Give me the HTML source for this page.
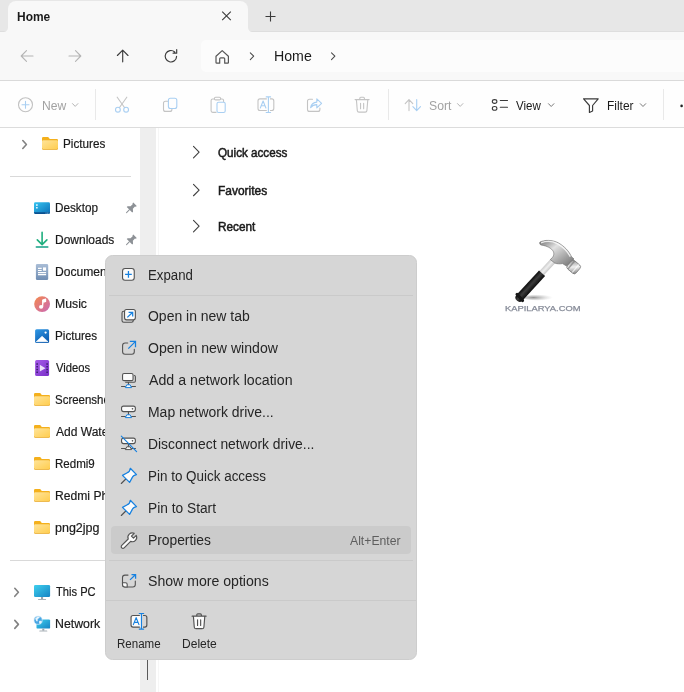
<!DOCTYPE html>
<html><head><meta charset="utf-8"><title>Home</title>
<style>*{box-sizing:border-box;margin:0;padding:0}
html,body{width:684px;height:692px;overflow:hidden;background:#fff;font-family:"Liberation Sans",sans-serif;color:#1b1b1b}
.a{position:absolute}
#root{position:relative;width:684px;height:692px;overflow:hidden;background:#fff}
.t{position:absolute;white-space:nowrap;line-height:1;transform-origin:0 0}
svg{position:absolute;left:0;top:0;overflow:visible}
</style></head><body><div id="root">

<div class="a" style="left:0;top:0;width:684px;height:32px;background:#e7e7e7"></div>
<div class="a" style="left:0;top:31px;width:684px;height:1px;background:#dedede"></div>
<div class="a" style="left:8px;top:1px;width:240px;height:31px;background:#f8f8f8;border-radius:8px 8px 0 0"></div>
<div class="a" style="left:0;top:32px;width:684px;height:48px;background:#f8f8f8"></div>
<div class="a" style="left:201px;top:40px;width:500px;height:32px;background:#fcfcfc;border-radius:5px"></div>
<div class="a" style="left:0;top:80px;width:684px;height:1px;background:#dadada"></div>
<div class="a" style="left:0;top:81px;width:684px;height:46px;background:#fefefe"></div>
<div class="a" style="left:0;top:127px;width:684px;height:1px;background:#dcdcdc"></div>
<div class="a" style="left:140px;top:128px;width:16px;height:564px;background:#eeeeee"></div>
<div class="a" style="left:158px;top:128px;width:1px;height:564px;background:#f6f6f6"></div>
<div class="a" style="left:146.6px;top:655px;width:1.8px;height:24.5px;background:#5a5a5a"></div>
<div class="a" style="left:95px;top:89px;width:1px;height:31px;background:#e9e9e9"></div>
<div class="a" style="left:388px;top:89px;width:1px;height:31px;background:#e9e9e9"></div>
<div class="a" style="left:663px;top:89px;width:1px;height:31px;background:#e9e9e9"></div>
<div class="a" style="left:10px;top:176px;width:121px;height:1px;background:#d9d9d9"></div>
<div class="a" style="left:10px;top:560px;width:121px;height:1px;background:#d9d9d9"></div>

<svg width="684" height="692" viewBox="0 0 684 692"><path d="M8 27.5A4.5 4.5 0 0 1 3.5 32L8 32Z" fill="#f8f8f8"/><path d="M248 27.5A4.5 4.5 0 0 0 252.5 32L248 32Z" fill="#f8f8f8"/>
<path d="M222.200 11.600l8.600 8.600M230.800 11.600l-8.600 8.600" stroke="#3b3b3b" stroke-width="1.1" fill="none"/>
<path d="M265.5 16.5h10M270.5 11.5v10" stroke="#3b3b3b" stroke-width="1.1" fill="none"/>
<path d="M33 56H21.2M26.5 50.7L21.2 56l5.3 5.3" stroke="#b4b4b4" stroke-width="1.1" fill="none" stroke-linecap="round" stroke-linejoin="round"/>
<path d="M69 56h11.8M75.5 50.7l5.3 5.3-5.3 5.3" stroke="#b4b4b4" stroke-width="1.1" fill="none" stroke-linecap="round" stroke-linejoin="round"/>
<path d="M122.7 61.8V50.2M117.4 55.5l5.3-5.3 5.3 5.3" stroke="#3b3b3b" stroke-width="1.15" fill="none" stroke-linecap="round" stroke-linejoin="round"/>
<path d="M176.6 56.3a5.7 5.7 0 1 1-1.9-4.3M176.7 49.6v3.6h-3.6" stroke="#3b3b3b" stroke-width="1.15" fill="none" stroke-linecap="round" stroke-linejoin="round"/>
<path d="M216 56.2l6.2-5.6 6.2 5.6v6.2a.8.8 0 0 1-.8.8h-2.9v-4.4a1 1 0 0 0-1-1h-3a1 1 0 0 0-1 1v4.4h-2.9a.8.8 0 0 1-.8-.8z" stroke="#555" stroke-width="1.2" fill="none" stroke-linejoin="round"/>
<path d="M250.3 52.8l3.4 3.4-3.4 3.4" stroke="#4a4a4a" stroke-width="1.05" fill="none" stroke-linecap="round" stroke-linejoin="round"/>
<path d="M331.5 52.8l3.4 3.4-3.4 3.4" stroke="#4a4a4a" stroke-width="1.05" fill="none" stroke-linecap="round" stroke-linejoin="round"/>
<circle cx="25.5" cy="104.7" r="7" stroke="#c2c2c2" stroke-width="1.1" fill="none"/>
<path d="M22 104.7h7M25.5 101.2v7" stroke="#a9cff2" stroke-width="1.1" fill="none" stroke-linecap="round"/>
<path d="M72.5 103.6l2.7 2.8 2.7-2.8" stroke="#b5b5b5" stroke-width="1.0" fill="none" stroke-linecap="round" stroke-linejoin="round"/>
<path d="M117.2 97.2l7.3 10.3M126.8 97.2l-7.3 10.3" stroke="#c4c4c4" stroke-width="1.1" fill="none" stroke-linecap="round"/>
<circle cx="117.9" cy="109.7" r="2.4" stroke="#a9cff2" stroke-width="1.1" fill="none"/><circle cx="126.1" cy="109.7" r="2.4" stroke="#a9cff2" stroke-width="1.1" fill="none"/>
<path d="M167.5 101.2h-2a2 2 0 0 0-2 2v6.2a2 2 0 0 0 2 2h4.4a2 2 0 0 0 2-2v-0.4" stroke="#c4c4c4" stroke-width="1.1" fill="none" stroke-linecap="round"/>
<rect x="168.4" y="98.3" width="8.4" height="10.2" rx="2" stroke="#a9cff2" stroke-width="1.1" fill="none"/>
<path d="M214.3 99h-1.6a1.6 1.6 0 0 0-1.6 1.6v10.2a1.6 1.6 0 0 0 1.6 1.6h3.3M220.6 99h1.4a1.6 1.6 0 0 1 1.6 1.6v1" stroke="#c4c4c4" stroke-width="1.1" fill="none" stroke-linecap="round"/>
<rect x="214.4" y="97.3" width="6.2" height="2.6" rx="1.2" stroke="#c4c4c4" stroke-width="1.1" fill="none"/>
<rect x="217" y="102.2" width="8.2" height="10.3" rx="1.6" stroke="#a9cff2" stroke-width="1.1" fill="none"/>
<path d="M266.79999999999995 98.9H260.0a2 2 0 0 0-2 2v7.599999999999994a2 2 0 0 0 2 2H266.79999999999995M270.0 98.9H271.79999999999995a2 2 0 0 1 2 2v7.599999999999994a2 2 0 0 1-2 2H270.0" stroke="#c4c4c4" stroke-width="1.1" fill="none"/><path d="M268.4 96.9v15.6M266.2 96.9h4.4M266.2 112.5h4.4" stroke="#a9cff2" stroke-width="1.1" fill="none" stroke-linecap="round"/><path d="M260.29999999999995 108.0l2.8-7 2.8 7M261.29999999999995 105.7h3.6" stroke="#a9cff2" stroke-width="1.1" fill="none" stroke-linecap="round" stroke-linejoin="round"/>
<path d="M312.5 99.2h-3a2 2 0 0 0-2 2v8.2a2 2 0 0 0 2 2h8.4a2 2 0 0 0 2-2v-1.4" stroke="#c4c4c4" stroke-width="1.1" fill="none" stroke-linecap="round"/>
<path d="M310.6 107.6c.6-3.4 2.600-5.300 6.200-5.500v-3.300l4.800 4.500-4.800 4.500v-3.200c-2.600 0-4.600.9-6.200 3z" stroke="#a9cff2" stroke-width="1.1" fill="none" stroke-linejoin="round"/>
<g transform="translate(362.1 105) scale(1.0)"><path d="M-7 -5.400h14M-2.300 -5.400v-1.300a1 1 0 0 1 1-1h2.600a1 1 0 0 1 1 1v1.300M-5.700 -5.400l.9 11a1.700 1.700 0 0 0 1.700 1.500h6.200a1.700 1.700 0 0 0 1.700-1.500l.9-11M-1.550 -1.800v5.600M1.550 -1.800v5.600" stroke="#c4c4c4" stroke-width="1.1" fill="none" stroke-linecap="round" stroke-linejoin="round"/></g>
<path d="M409 110.6V99.6M405.200 103.600l3.800-4 3.800 4" stroke="#c4c4c4" stroke-width="1.1" fill="none" stroke-linecap="round" stroke-linejoin="round"/>
<path d="M416.700 99.500v11M412.900 106.600l3.800 4 3.800-4" stroke="#a9cff2" stroke-width="1.1" fill="none" stroke-linecap="round" stroke-linejoin="round"/>
<path d="M457.5 103.6l2.7 2.8 2.7-2.8" stroke="#b5b5b5" stroke-width="1.0" fill="none" stroke-linecap="round" stroke-linejoin="round"/>
<ellipse cx="494.6" cy="101.5" rx="2.300" ry="1.900" stroke="#3a3a3a" stroke-width="1.1" fill="none"/><ellipse cx="494.6" cy="108.400" rx="2.300" ry="1.900" stroke="#3a3a3a" stroke-width="1.1" fill="none"/>
<path d="M500.3 100.500h7.200M500.3 107.300h7.200" stroke="#3a3a3a" stroke-width="1.1" fill="none" stroke-linecap="round"/>
<path d="M548.5 103.69999999999999l2.7 2.8 2.7-2.8" stroke="#7a7a7a" stroke-width="1.0" fill="none" stroke-linecap="round" stroke-linejoin="round"/>
<path d="M583.600 98.800h14.600l-5.600 6.700v5.500l-3.200 1.500v-7z" stroke="#3a3a3a" stroke-width="1.15" fill="none" stroke-linejoin="round"/>
<path d="M640.3 103.69999999999999l2.7 2.8 2.7-2.8" stroke="#7a7a7a" stroke-width="1.0" fill="none" stroke-linecap="round" stroke-linejoin="round"/>
<circle cx="681.6" cy="105.9" r="1.3" fill="#222"/>
<defs>
<linearGradient id="fg" x1="0" y1="0" x2="1" y2="1"><stop offset="0" stop-color="#ffe49a"/><stop offset="1" stop-color="#ffcd4f"/></linearGradient>
<linearGradient id="mus" x1="0" y1="0" x2="1" y2="1"><stop offset="0" stop-color="#f5894a"/><stop offset="1" stop-color="#c968b8"/></linearGradient>
<linearGradient id="desk" x1="0" y1="0" x2="1" y2="1"><stop offset="0" stop-color="#35c4f0"/><stop offset="1" stop-color="#0b6fb8"/></linearGradient>
<linearGradient id="doc" x1="0" y1="0" x2="0" y2="1"><stop offset="0" stop-color="#a9bdd6"/><stop offset="1" stop-color="#6f8db3"/></linearGradient>
<linearGradient id="pc" x1="0" y1="0" x2="1" y2="1"><stop offset="0" stop-color="#3fd0ee"/><stop offset="1" stop-color="#1583c4"/></linearGradient>
<linearGradient id="vid" x1="0" y1="0" x2="1" y2="1"><stop offset="0" stop-color="#a55be8"/><stop offset="1" stop-color="#7a2fc9"/></linearGradient>
</defs>
<path d="M22.8 140.5l3.6 4.0l-3.6 4.0" stroke="#828282" stroke-width="1.6" fill="none" stroke-linecap="round" stroke-linejoin="round"/>
<path d="M14.8 588.3l3.6 4.0l-3.6 4.0" stroke="#828282" stroke-width="1.6" fill="none" stroke-linecap="round" stroke-linejoin="round"/>
<path d="M14.8 620.4l3.6 4.0l-3.6 4.0" stroke="#828282" stroke-width="1.6" fill="none" stroke-linecap="round" stroke-linejoin="round"/>
<path d="M42 138.2a1.200 1.200 0 0 1 1.200-1.200h5.000l1.600 1.900h7.000a1.200 1.200 0 0 1 1.200 1.200v2H42z" fill="#f4b01c"/><rect x="42" y="140.2" width="16" height="9.5" rx="1.200" fill="#e8a419"/><rect x="42" y="140.2" width="16" height="8.8" rx="1.200" fill="url(#fg)"/>
<path d="M34 394.2a1.200 1.200 0 0 1 1.200-1.200h5.000l1.600 1.900h7.000a1.200 1.200 0 0 1 1.200 1.200v2H34z" fill="#f4b01c"/><rect x="34" y="396.2" width="16" height="9.5" rx="1.200" fill="#e8a419"/><rect x="34" y="396.2" width="16" height="8.8" rx="1.200" fill="url(#fg)"/>
<path d="M34 426.2a1.200 1.200 0 0 1 1.200-1.200h5.000l1.600 1.900h7.000a1.200 1.200 0 0 1 1.200 1.200v2H34z" fill="#f4b01c"/><rect x="34" y="428.2" width="16" height="9.5" rx="1.200" fill="#e8a419"/><rect x="34" y="428.2" width="16" height="8.8" rx="1.200" fill="url(#fg)"/>
<path d="M34 458.2a1.200 1.200 0 0 1 1.200-1.200h5.000l1.600 1.900h7.000a1.200 1.200 0 0 1 1.200 1.200v2H34z" fill="#f4b01c"/><rect x="34" y="460.2" width="16" height="9.5" rx="1.200" fill="#e8a419"/><rect x="34" y="460.2" width="16" height="8.8" rx="1.200" fill="url(#fg)"/>
<path d="M34 490.2a1.200 1.200 0 0 1 1.200-1.200h5.000l1.600 1.900h7.000a1.200 1.200 0 0 1 1.200 1.200v2H34z" fill="#f4b01c"/><rect x="34" y="492.2" width="16" height="9.5" rx="1.200" fill="#e8a419"/><rect x="34" y="492.2" width="16" height="8.8" rx="1.200" fill="url(#fg)"/>
<path d="M34 522.2a1.200 1.200 0 0 1 1.200-1.200h5.000l1.600 1.900h7.000a1.200 1.200 0 0 1 1.200 1.200v2H34z" fill="#f4b01c"/><rect x="34" y="524.2" width="16" height="9.5" rx="1.200" fill="#e8a419"/><rect x="34" y="524.2" width="16" height="8.8" rx="1.200" fill="url(#fg)"/>
<rect x="34" y="202.3" width="16" height="11.7" rx="1.4" fill="url(#desk)"/><path d="M34 212.300h16v0.300a1.400 1.400 0 0 1-1.400 1.400h-13.200a1.400 1.400 0 0 1-1.400-1.400z" fill="#0b4f8e"/><rect x="36" y="204.300" width="1.700" height="1.500" fill="#e8f8ff"/><rect x="36" y="207" width="1.700" height="1.500" fill="#d8f2ff"/><rect x="45.600" y="212.700" width="0.900" height="0.900" fill="#9fd8f5"/><rect x="47.200" y="212.700" width="0.900" height="0.900" fill="#9fd8f5"/><rect x="48.600" y="212.700" width="0.700" height="0.900" fill="#9fd8f5"/>
<path d="M42.100 232.400v11.600M37.300 239.900l4.800 4.700 4.800-4.700" stroke="#1fae7e" stroke-width="1.600" fill="none" stroke-linecap="round" stroke-linejoin="round"/><path d="M36.300 246.900h11.500" stroke="#14a086" stroke-width="1.500" fill="none" stroke-linecap="round"/>
<g transform="translate(131.2 208.0) rotate(45) scale(0.9)"><path d="M-2.700 -6.000h5.400v1.200l-0.900 0.700v3.300l2.500 2.200v1.300h-8.600v-1.300l2.500-2.200v-3.300l-0.900-0.700z" fill="#8d9196"/><path d="M0 2.700v4.600" stroke="#8d9196" stroke-width="1.100" stroke-linecap="round"/></g>
<g transform="translate(131.2 240.0) rotate(45) scale(0.9)"><path d="M-2.700 -6.000h5.400v1.200l-0.900 0.700v3.300l2.500 2.200v1.300h-8.600v-1.300l2.500-2.200v-3.300l-0.900-0.700z" fill="#8d9196"/><path d="M0 2.700v4.600" stroke="#8d9196" stroke-width="1.100" stroke-linecap="round"/></g>
<rect x="35.900" y="264.100" width="12.300" height="15.900" rx="1.300" fill="url(#doc)"/><path d="M38 268.300h3.700M38 270.450h3.700M38 272.600h8.100M38 274.650h8.100" stroke="#fff" stroke-width="1.150" fill="none"/><rect x="43" y="267.400" width="3.100" height="3.300" fill="#fff"/>
<circle cx="42.100" cy="304.100" r="7.900" fill="url(#mus)"/><ellipse cx="41.100" cy="306.900" rx="2.100" ry="1.800" fill="#fff"/><path d="M42.700 306.800v-6.800l2.900-0.900v2.300l-2.000 0.700" stroke="#fff" stroke-width="1.200" fill="#fff" stroke-linejoin="round"/>
<defs><linearGradient id="pic" x1="0" y1="0" x2="0.600" y2="1"><stop offset="0" stop-color="#3199e6"/><stop offset="1" stop-color="#0b5cb0"/></linearGradient></defs><rect x="35.100" y="329.200" width="14" height="13.800" rx="1.500" fill="url(#pic)"/><path d="M36.200 341.700l5.900-5.500 5.900 5.500z" fill="#fff" stroke="#fff" stroke-width="0.6" stroke-linejoin="round"/><circle cx="45.600" cy="332.600" r="1.150" fill="#fff"/>
<rect x="35.100" y="360.100" width="14" height="15.800" rx="1.500" fill="url(#vid)"/><path d="M39.800 364.800v6.800l5.700-3.400z" fill="#eadff7"/><rect x="36.3" y="363.2" width="1.700" height="1.500" rx="0.300" fill="#3f2072"/><rect x="36.3" y="365.9" width="1.700" height="1.500" rx="0.300" fill="#3f2072"/><rect x="36.3" y="368.7" width="1.700" height="1.500" rx="0.300" fill="#3f2072"/><rect x="36.3" y="371.4" width="1.700" height="1.500" rx="0.300" fill="#3f2072"/><rect x="46.3" y="363.2" width="1.700" height="1.500" rx="0.300" fill="#3f2072"/><rect x="46.3" y="365.9" width="1.700" height="1.500" rx="0.300" fill="#3f2072"/><rect x="46.3" y="368.7" width="1.700" height="1.500" rx="0.300" fill="#3f2072"/><rect x="46.3" y="371.4" width="1.700" height="1.500" rx="0.300" fill="#3f2072"/>
<rect x="34" y="585" width="16.100" height="12" rx="1.300" fill="url(#pc)"/><rect x="41" y="597" width="2.100" height="2.200" fill="#9aa4ad"/><rect x="38" y="599" width="8.100" height="1.100" rx="0.400" fill="#a9b1b8"/>
<rect x="36.500" y="619.400" width="13.600" height="9.200" rx="1.200" fill="url(#pc)"/><rect x="42.300" y="628.600" width="2.000" height="2.100" fill="#9aa4ad"/><rect x="39.300" y="630.500" width="8.000" height="1.100" rx="0.400" fill="#a9b1b8"/><circle cx="38.100" cy="620.300" r="4.100" fill="#4aa6e3"/><circle cx="38.100" cy="620.300" r="4.100" fill="none" stroke="#d5ecfa" stroke-width="0.700"/><path d="M35.200 618.600c1.200-1.600 3.000-2.200 4.600-1.500c-0.400 1.300-1.000 1.500-2.000 1.800c-0.600 1.000 0.500 1.800-0.600 2.600c-0.900 0.100-1.500-1.400-2.000-2.900zM39.300 621.000c1.000-0.600 2.000-0.300 2.600 0.400c-0.300 1.300-1.000 2.200-2.100 2.700c-0.700-0.900-1.000-2.100-0.500-3.100z" fill="#e6f4fd"/>
<path d="M193.500 146.4l5.600 5.700l-5.600 5.700" stroke="#404040" stroke-width="1.100" fill="none" stroke-linecap="round" stroke-linejoin="round"/>
<path d="M193.500 184.35000000000002l5.600 5.700l-5.600 5.700" stroke="#404040" stroke-width="1.100" fill="none" stroke-linecap="round" stroke-linejoin="round"/>
<path d="M193.500 220.45000000000002l5.600 5.700l-5.600 5.700" stroke="#404040" stroke-width="1.100" fill="none" stroke-linecap="round" stroke-linejoin="round"/>
<defs>
<linearGradient id="hm1" x1="0" y1="0" x2="1" y2="1"><stop offset="0" stop-color="#6f6f6f"/><stop offset="0.35" stop-color="#e2e2e2"/><stop offset="0.7" stop-color="#a2a2a2"/><stop offset="1" stop-color="#6e6e6e"/></linearGradient>
<linearGradient id="hm2" x1="0" y1="0" x2="1" y2="1"><stop offset="0" stop-color="#8a8a8a"/><stop offset="0.5" stop-color="#efefef"/><stop offset="1" stop-color="#7a7a7a"/></linearGradient>
<linearGradient id="hm4" x1="0" y1="0" x2="0" y2="1"><stop offset="0" stop-color="#0c0c0c"/><stop offset="0.45" stop-color="#3c3c3c"/><stop offset="1" stop-color="#0e0e0e"/></linearGradient>
<linearGradient id="hm3" x1="0" y1="0" x2="1" y2="1"><stop offset="0" stop-color="#0e0e0e"/><stop offset="0.5" stop-color="#3a3a3a"/><stop offset="1" stop-color="#111"/></linearGradient>
<radialGradient id="hsh" cx="0.35" cy="0.5" r="0.65"><stop offset="0" stop-color="#6e6e6e" stop-opacity="0.75"/><stop offset="1" stop-color="#bdbdbd" stop-opacity="0"/></radialGradient>
<filter id="hb" x="-10%" y="-10%" width="120%" height="120%"><feGaussianBlur stdDeviation="0.45"/></filter>
</defs>
<g filter="url(#hb)">
<ellipse cx="538" cy="297.600" rx="15" ry="2.800" fill="url(#hsh)"/>
<path d="M541.800 273.000L554.000 259.800" stroke="url(#hm2)" stroke-width="6.200" fill="none"/>
<path d="M0 -4.100H33.200V4.100H0A4.100 4.100 0 0 1 0 -4.100Z" transform="translate(519.600 297.600) rotate(-47.400)" fill="url(#hm4)"/>
<path d="M517.000 294.300L522.600 300.600" stroke="#151515" stroke-width="3.000" stroke-linecap="round" fill="none"/>
<path d="M540.000 242.000C544.500 239.900 552.000 239.600 558.000 242.700C564.000 246.000 569.000 251.000 571.500 256.800L574.000 259.000L566.500 266.000L562.500 263.600C559.500 264.000 557.000 264.000 554.700 263.000L550.300 259.600C553.600 257.000 554.600 254.000 553.200 251.300C551.600 248.300 547.000 245.800 541.000 245.000C539.600 244.500 539.300 242.800 540.000 242.000Z" fill="url(#hm1)" stroke="#6a6a6a" stroke-width="0.600"/>
<path d="M541.000 242.800C546.000 241.000 552.500 241.000 557.600 243.800C563.000 246.800 567.600 251.300 570.300 256.600" stroke="#fafafa" stroke-width="1.400" fill="none" opacity="0.850"/>
<g transform="rotate(40 573.700 267.000)"><rect x="568.000" y="261.600" width="11.400" height="10.800" rx="2.600" fill="url(#hm2)" stroke="#707070" stroke-width="0.700"/><rect x="569.800" y="261.800" width="1.500" height="10.400" fill="#7c7c7c" opacity="0.700"/><rect x="575.500" y="262.000" width="1.200" height="10.000" fill="#fff" opacity="0.700"/></g>
</g></svg>
<span class="t" style="left:16.81px;top:10.20px;font-size:13px;font-weight:bold;color:#1b1b1b;transform:scaleX(0.9200)">Home</span>
<span class="t" style="left:273.99px;top:48.85px;font-size:14px;font-weight:normal;color:#1b1b1b;transform:scaleX(1.0126)">Home</span>
<span class="t" style="left:42.07px;top:99.30px;font-size:13px;font-weight:normal;color:#a2a2a2;transform:scaleX(0.9320)">New</span>
<span class="t" style="left:428.50px;top:99.30px;font-size:13px;font-weight:normal;color:#a2a2a2;transform:scaleX(0.9391)">Sort</span>
<span class="t" style="left:516.08px;top:99.30px;font-size:13px;font-weight:normal;color:#1b1b1b;transform:scaleX(0.8901)">View</span>
<span class="t" style="left:606.58px;top:99.00px;font-size:13px;font-weight:normal;color:#1b1b1b;transform:scaleX(0.9189)">Filter</span>
<span class="t" style="left:62.90px;top:138.22px;font-size:12.5px;font-weight:normal;color:#1b1b1b;-webkit-text-stroke:0.2px #1b1b1b;transform:scaleX(0.9364)">Pictures</span>
<span class="t" style="left:54.80px;top:201.62px;font-size:12.5px;font-weight:normal;color:#1b1b1b;-webkit-text-stroke:0.2px #1b1b1b;transform:scaleX(0.9385)">Desktop</span>
<span class="t" style="left:54.98px;top:233.52px;font-size:12.5px;font-weight:normal;color:#1b1b1b;-webkit-text-stroke:0.2px #1b1b1b;transform:scaleX(0.9597)">Downloads</span>
<span class="t" style="left:54.97px;top:265.52px;font-size:12.5px;font-weight:normal;color:#1b1b1b;-webkit-text-stroke:0.2px #1b1b1b;transform:scaleX(0.9687)">Documents</span>
<span class="t" style="left:54.97px;top:297.52px;font-size:12.5px;font-weight:normal;color:#1b1b1b;-webkit-text-stroke:0.2px #1b1b1b;transform:scaleX(0.9795)">Music</span>
<span class="t" style="left:55.00px;top:329.52px;font-size:12.5px;font-weight:normal;color:#1b1b1b;-webkit-text-stroke:0.2px #1b1b1b;transform:scaleX(0.9341)">Pictures</span>
<span class="t" style="left:55.70px;top:361.52px;font-size:12.5px;font-weight:normal;color:#1b1b1b;-webkit-text-stroke:0.2px #1b1b1b;transform:scaleX(0.8980)">Videos</span>
<span class="t" style="left:55.24px;top:393.52px;font-size:12.5px;font-weight:normal;color:#1b1b1b;-webkit-text-stroke:0.2px #1b1b1b;transform:scaleX(0.9178)">Screenshots</span>
<span class="t" style="left:55.70px;top:425.52px;font-size:12.5px;font-weight:normal;color:#1b1b1b;-webkit-text-stroke:0.2px #1b1b1b;transform:scaleX(0.9630)">Add Watermark</span>
<span class="t" style="left:55.01px;top:457.52px;font-size:12.5px;font-weight:normal;color:#1b1b1b;-webkit-text-stroke:0.2px #1b1b1b;transform:scaleX(0.9238)">Redmi9</span>
<span class="t" style="left:54.97px;top:489.52px;font-size:12.5px;font-weight:normal;color:#1b1b1b;-webkit-text-stroke:0.2px #1b1b1b;transform:scaleX(0.9705)">Redmi Phone</span>
<span class="t" style="left:54.75px;top:521.52px;font-size:12.5px;font-weight:normal;color:#1b1b1b;-webkit-text-stroke:0.2px #1b1b1b;transform:scaleX(0.9988)">png2jpg</span>
<span class="t" style="left:55.50px;top:585.52px;font-size:12.5px;font-weight:normal;color:#1b1b1b;-webkit-text-stroke:0.2px #1b1b1b;transform:scaleX(0.8909)">This PC</span>
<span class="t" style="left:54.76px;top:617.52px;font-size:12.5px;font-weight:normal;color:#1b1b1b;-webkit-text-stroke:0.2px #1b1b1b;transform:scaleX(0.9867)">Network</span>
<span class="t" style="left:218.36px;top:146.74px;font-size:12px;font-weight:normal;color:#1b1b1b;-webkit-text-stroke:0.5px #1b1b1b;transform:scaleX(0.9718)">Quick access</span>
<span class="t" style="left:218.10px;top:184.74px;font-size:12px;font-weight:normal;color:#1b1b1b;-webkit-text-stroke:0.5px #1b1b1b;transform:scaleX(0.9949)">Favorites</span>
<span class="t" style="left:218.11px;top:220.64px;font-size:12px;font-weight:normal;color:#1b1b1b;-webkit-text-stroke:0.5px #1b1b1b;transform:scaleX(0.9828)">Recent</span>
<span class="t" style="left:505.11px;top:305.43px;font-size:8px;font-weight:normal;color:#858a97;-webkit-text-stroke:0.25px #858a97;transform:scaleX(1.1688)">KAPILARYA.COM</span>

<div class="a" style="left:105px;top:255px;width:312px;height:405px;background:#d6d6d6;border-radius:7.5px;border:1px solid #cdcdcd"></div>
<div class="a" style="left:110.5px;top:526px;width:300.3px;height:28px;background:#cbcbcb;border-radius:4px"></div>
<div class="a" style="left:109px;top:295px;width:304px;height:1px;background:#cacaca"></div>
<div class="a" style="left:109px;top:560px;width:304px;height:1px;background:#cacaca"></div>
<div class="a" style="left:106px;top:600px;width:310px;height:1px;background:#cacaca"></div>

<svg width="684" height="692" viewBox="0 0 684 692"><rect x="122.550" y="268.550" width="11.700" height="11.700" rx="2.500" fill="#fbfbfb" stroke="#525252" stroke-width="1.100"/><path d="M125.100 274.450h6.700M128.450 271.100v6.700" stroke="#1681e0" stroke-width="1.250" fill="none"/>
<path d="M124 311.300h-0.300a1.700 1.700 0 0 0-1.700 1.700v7.600a1.700 1.700 0 0 0 1.700 1.700h7.900a1.700 1.700 0 0 0 1.700-1.700v-0.500" stroke="#525252" stroke-width="1.100" fill="none"/><rect x="124.550" y="309.550" width="10.800" height="10.300" rx="2.000" fill="#fbfbfb" stroke="#525252" stroke-width="1.100"/><path d="M127.300 317.400l5.200-4.900M128.600 312.400h4.100v4.200" stroke="#1681e0" stroke-width="1.250" fill="none" stroke-linejoin="miter"/>
<path d="M127.700 343h-2.600a2.500 2.500 0 0 0-2.500 2.500v6.300a2.500 2.500 0 0 0 2.500 2.500h6.700a2.500 2.500 0 0 0 2.500-2.500v-2.600" stroke="#525252" stroke-width="1.100" fill="none" stroke-linecap="round"/><path d="M128.300 348.600l7.000-7.000M129.800 341.400h5.700v5.900" stroke="#1681e0" stroke-width="1.250" fill="none"/>
<path d="M134 375.500h0.200a1.200 1.200 0 0 1 1.200 1.200v4.400a1.200 1.200 0 0 1-1.200 1.200h-9" stroke="#525252" stroke-width="1.100" fill="none"/><rect x="122.550" y="373.450" width="10.500" height="7.200" rx="1.500" fill="#fbfbfb" stroke="#525252" stroke-width="1.100"/>
<path d="M128.450 382.0v3.000" stroke="#525252" stroke-width="1.100" fill="none"/><path d="M121.100 386.5h14.800" stroke="#525252" stroke-width="1.000" fill="none"/><path d="M125.300 387.6l1.500-2.800h3.300l1.500 2.800z" fill="#fbfbfb" stroke="#1681e0" stroke-width="1.000" stroke-linejoin="round"/>
<rect x="121.550" y="406.1" width="13.800" height="5.500" rx="2.000" fill="#fbfbfb" stroke="#525252" stroke-width="1.100"/><circle cx="132.500" cy="408.85" r="0.800" fill="#525252"/>
<path d="M128.450 412.0v3.000" stroke="#525252" stroke-width="1.100" fill="none"/><path d="M121.100 416.5h14.800" stroke="#525252" stroke-width="1.000" fill="none"/><path d="M125.300 417.6l1.500-2.800h3.300l1.500 2.800z" fill="#fbfbfb" stroke="#1681e0" stroke-width="1.000" stroke-linejoin="round"/>
<rect x="121.550" y="438.1" width="13.800" height="5.500" rx="2.000" fill="#fbfbfb" stroke="#525252" stroke-width="1.100"/><circle cx="132.500" cy="440.85" r="0.800" fill="#525252"/>
<path d="M128.450 444.0v3.000" stroke="#525252" stroke-width="1.100" fill="none"/><path d="M121.100 448.5h14.800" stroke="#525252" stroke-width="1.000" fill="none"/><path d="M125.300 449.6l1.500-2.800h3.300l1.500 2.800z" fill="#fbfbfb" stroke="#525252" stroke-width="1.000" stroke-linejoin="round"/>
<path d="M121.300 436.100l15.300 15.600" stroke="#1681e0" stroke-width="1.150" fill="none" stroke-linecap="round"/>
<path d="M121.300 483.5l4.500-4.500" stroke="#525252" stroke-width="1.100" fill="none" stroke-linecap="round"/><path d="M130.300 468.3L136.500 474.6C134.000 475.0 132.700 476.0 132.200 477.6L129.600 482.4L122.500 475.4L127.300 472.7C128.900 472.2 129.900 470.9 130.300 468.3Z" fill="#fbfbfb" stroke="#1681e0" stroke-width="1.250" stroke-linejoin="round"/>
<path d="M121.300 515.5l4.500-4.500" stroke="#525252" stroke-width="1.100" fill="none" stroke-linecap="round"/><path d="M130.300 500.3L136.500 506.6C134.000 507.0 132.700 508.0 132.200 509.6L129.600 514.4L122.500 507.4L127.300 504.7C128.900 504.2 129.900 502.9 130.300 500.3Z" fill="#fbfbfb" stroke="#1681e0" stroke-width="1.250" stroke-linejoin="round"/>
<path d="M136.26 535.39A4.4 4.4 0 0 1 130.63 541.37L124.17 547.84A1.7 1.7 0 0 1 121.76 545.43L128.23 538.97A4.4 4.4 0 0 1 134.21 533.34L131.42 536.13L133.47 538.18Z" fill="#fbfbfb" stroke="#525252" stroke-width="1.150" stroke-linejoin="round"/>
<path d="M128 575.100h-3.000a2.500 2.500 0 0 0-2.500 2.500v6.900a2.500 2.500 0 0 0 2.500 2.500h7.800a2.500 2.500 0 0 0 2.500-2.500v-3.400" stroke="#525252" stroke-width="1.100" fill="none" stroke-linecap="round"/><path d="M122.500 582.700h3.000a1.700 1.700 0 0 1 1.700 1.700v2.600h-2.200a2.500 2.500 0 0 1-2.500-2.500z" fill="#fbfbfb" stroke="#525252" stroke-width="1.100"/><path d="M130.000 579.900l5.400-5.200M131.500 574.600h4.100v4.200" stroke="#1681e0" stroke-width="1.250" fill="none"/>
<path d="M141.400 615.500h-8.400a2 2 0 0 0-2 2v7.600a2 2 0 0 0 2 2h8.400z" fill="#fbfbfb"/><path d="M139.85 615.5H133.04999999999998a2 2 0 0 0-2 2v7.599999999999909a2 2 0 0 0 2 2H139.85M143.04999999999998 615.5H144.85a2 2 0 0 1 2 2v7.599999999999909a2 2 0 0 1-2 2H143.04999999999998" stroke="#525252" stroke-width="1.15" fill="none"/><path d="M141.45 613.5v15.6M139.25 613.5h4.4M139.25 629.0999999999999h4.4" stroke="#1681e0" stroke-width="1.15" fill="none" stroke-linecap="round"/><path d="M133.35 624.5999999999999l2.8-7 2.8 7M134.35 622.3h3.6" stroke="#1681e0" stroke-width="1.15" fill="none" stroke-linecap="round" stroke-linejoin="round"/>
<path d="M193.400 616.200h11.400l-0.900 10.800a1.700 1.700 0 0 1-1.700 1.500h-6.200a1.700 1.700 0 0 1-1.700-1.500z" fill="#fbfbfb"/><g transform="translate(199.1 621.6) scale(1.0)"><path d="M-7 -5.400h14M-2.300 -5.400v-1.300a1 1 0 0 1 1-1h2.600a1 1 0 0 1 1 1v1.300M-5.700 -5.400l.9 11a1.700 1.700 0 0 0 1.700 1.500h6.200a1.700 1.700 0 0 0 1.700-1.500l.9-11M-1.550 -1.800v5.600M1.550 -1.800v5.600" stroke="#525252" stroke-width="1.15" fill="none" stroke-linecap="round" stroke-linejoin="round"/></g></svg>
<span class="t" style="left:147.96px;top:268.25px;font-size:14px;font-weight:normal;color:#262626;transform:scaleX(0.9443)">Expand</span>
<span class="t" style="left:148.40px;top:309.25px;font-size:14px;font-weight:normal;color:#262626;transform:scaleX(0.9980)">Open in new tab</span>
<span class="t" style="left:148.40px;top:341.25px;font-size:14px;font-weight:normal;color:#262626;transform:scaleX(1.0054)">Open in new window</span>
<span class="t" style="left:148.65px;top:373.25px;font-size:14px;font-weight:normal;color:#262626;transform:scaleX(1.0135)">Add a network location</span>
<span class="t" style="left:147.90px;top:405.25px;font-size:14px;font-weight:normal;color:#262626;transform:scaleX(0.9968)">Map network drive...</span>
<span class="t" style="left:147.91px;top:437.25px;font-size:14px;font-weight:normal;color:#262626;transform:scaleX(0.9898)">Disconnect network drive...</span>
<span class="t" style="left:147.94px;top:469.25px;font-size:14px;font-weight:normal;color:#262626;transform:scaleX(0.9597)">Pin to Quick access</span>
<span class="t" style="left:147.92px;top:501.25px;font-size:14px;font-weight:normal;color:#262626;transform:scaleX(0.9817)">Pin to Start</span>
<span class="t" style="left:147.91px;top:533.25px;font-size:14px;font-weight:normal;color:#262626;transform:scaleX(0.9863)">Properties</span>
<span class="t" style="left:349.85px;top:534.54px;font-size:12px;font-weight:normal;color:#5e5e5e;transform:scaleX(1.0173)">Alt+Enter</span>
<span class="t" style="left:148.14px;top:574.15px;font-size:14px;font-weight:normal;color:#262626;transform:scaleX(1.0076)">Show more options</span>
<span class="t" style="left:117.38px;top:637.84px;font-size:12px;font-weight:normal;color:#262626;transform:scaleX(0.9627)">Rename</span>
<span class="t" style="left:181.95px;top:637.84px;font-size:12px;font-weight:normal;color:#262626;transform:scaleX(1.0030)">Delete</span>
</div></body></html>
